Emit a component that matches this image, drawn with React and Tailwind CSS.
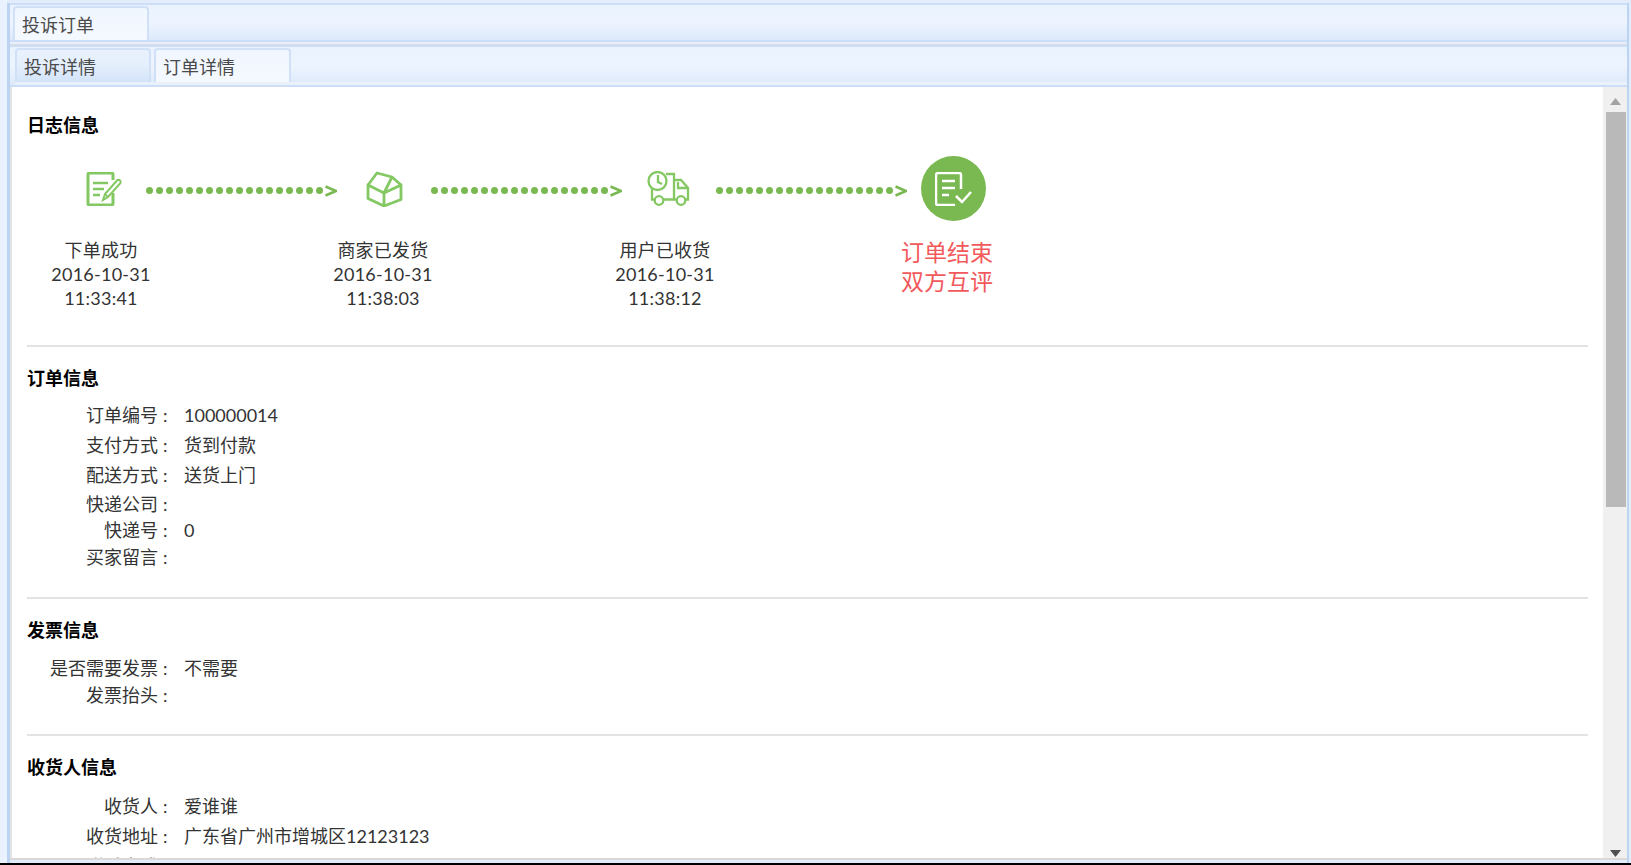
const font = "font-['Lato','Noto_Sans_CJK_SC',sans-serif]"

const NoteIcon = () => (
  <svg width="36" height="34" viewBox="0 0 36 34" fill="none" stroke="#84c863" strokeWidth="2.400">
    <path d="M27 8V2.500a1.500 1.500 0 0 0-1.500-1.500h-22A1.500 1.500 0 0 0 2 2.500v29A1.500 1.500 0 0 0 3.500 33h22a1.500 1.500 0 0 0 1.500-1.500V21" strokeWidth="3" />
    <path d="M7 11h15M7 17h11M7 23h7" />
    <path d="M17 28l2-6L31 8.500a2 2 0 0 1 3 0 2 2 0 0 1 0 3L22 25z" strokeWidth="2" />
    <path d="M19 22l3 3" strokeWidth="1.800" />
  </svg>
)

const BoxIcon = () => (
  <svg width="37" height="36" viewBox="0 0 37 36" fill="none" stroke="#84c863" strokeWidth="2.800" strokeLinejoin="round">
    <path d="M2 14l16 8 17-8v14.500L18 35 2 27.500z" />
    <path d="M18 22v13" />
    <path d="M2 14L11 2l15 4 9 8" />
    <path d="M18 22l8-16" />
  </svg>
)

const TruckIcon = () => (
  <svg width="43" height="35" viewBox="0 0 43 35" fill="none" stroke="#84c863" strokeWidth="2.300">
    <circle cx="10.500" cy="10" r="9" />
    <path d="M11 4v7l4 2" />
    <path d="M5 18v10.500h3M19 3h8v25.500H16M27 9h7l7 8v11.500h-3M27 28.500h3" />
    <path d="M31 11v6h9" />
    <circle cx="12" cy="29.500" r="4.300" />
    <circle cx="34" cy="29.500" r="4.300" />
  </svg>
)

const DoneIcon = () => (
  <div className="w-[65px] h-[65px] rounded-full bg-[#7ab951] flex items-center justify-center">
    <svg width="37" height="34" viewBox="0 0 37 34" fill="none" stroke="#fff" strokeWidth="2.500">
      <path d="M26 17V3a2 2 0 0 0-2-2H3a2 2 0 0 0-2 2v28a2 2 0 0 0 2 2h17" />
      <path d="M7 9h13M7 16h13M7 23h7" />
      <path d="M21 24l6 6 9-10" />
    </svg>
  </div>
)

const Dots = ({ className }) => (
  <div className={`flex items-center pt-[4px] ${className}`}>
    <div className="flex gap-[3px]">
      {Array.from({ length: 18 }).map((_, i) => (
        <span key={i} className="w-[7px] h-[7px] rounded-full bg-[#7ab951]" />
      ))}
    </div>
    <svg className="ml-[2px]" width="12" height="12" viewBox="0 0 12 12" fill="none" stroke="#7ab951" strokeWidth="2.600">
      <path d="M0.500 1.500L11 6 0.500 10.500" />
    </svg>
  </div>
)

const Row = ({ label, value, h = 'h-[30px]' }) => (
  <div className={`flex items-center ${h}`}>
    <div className="w-[131px] text-right whitespace-nowrap">{label}</div>
    <div className="w-[11px] ml-[5px] mr-[10px]">:</div>
    <div className="whitespace-nowrap">{value}</div>
  </div>
)

const Heading = ({ children, className }) => (
  <div className={`h-[24px] leading-[24px] font-bold text-black ${className}`}>{children}</div>
)

const Divider = ({ className }) => <div className={`h-[2px] bg-[#e3e3e3] ${className}`} />

const Step = ({ lines }) => (
  <div className="w-[100px] text-center whitespace-nowrap leading-[24px] tracking-[0.25px]">
    {lines.map((l) => (
      <div key={l}>{l}</div>
    ))}
  </div>
)

const Tab = ({ active, children, className }) => (
  <div
    className={`h-[34px] w-[135px] shrink-0 rounded-t-[4px] border-2 border-b-0 border-[#cfe0f7] leading-[34px] pl-[7px] text-[#4a4a4a] ${
      active
        ? 'bg-gradient-to-b from-[#f0f6ff] via-[#f3f8ff] to-[#f4f8ff]'
        : 'bg-gradient-to-b from-[#e9f1fd] via-[#e4eefc] to-[#d3e3f9]'
    } ${className}`}
  >
    {children}
  </div>
)

// tab bar: the inner one has its tabs on a thin pale band above the blue bottom line
const Strip = ({ band, children, className }) => (
  <div className={`flex flex-col shrink-0 border-t-2 border-b-2 border-[#cddff7] bg-gradient-to-b from-[#e9f2fe] via-[#edf4ff] to-[#dde9fa] ${className}`}>
    <div className="flex-1 min-h-0 flex items-end">{children}</div>
    {band && <div className="h-[3px] shrink-0 bg-[#eaf1fc]" />}
  </div>
)

const Scrollbar = () => (
  <div className="w-[24px] shrink-0 bg-[#f0f0f0] flex flex-col items-center pl-[1px]">
    <div className="h-[25px] shrink-0 flex items-center justify-center pt-[3px]">
      <svg width="11" height="7" viewBox="0 0 11 7">
        <path d="M5.500 0L11 7H0z" fill="#a3a3a3" />
      </svg>
    </div>
    <div className="w-[20px] h-[395px] shrink-0 bg-[#b9b9b9]" />
    <div className="flex-1" />
    <div className="h-[10px] shrink-0 flex items-center justify-center">
      <svg width="11" height="7" viewBox="0 0 11 7">
        <path d="M5.500 7L11 0H0z" fill="#505050" />
      </svg>
    </div>
  </div>
)

export default function App() {
  return (
    <div className={`h-screen w-full overflow-hidden flex bg-[#e2ecfa] border-b-2 border-black text-[18px] text-[#333] ${font}`}>
      <div className="w-[7px] shrink-0 bg-[#e9f2fe]" />
      <div className="flex-1 min-w-0 flex flex-col border-l-[3px] border-r-[2px] border-[#bcd3f1] mt-[3px]">
        <Strip className="h-[39px] pl-[3px]">
          <Tab active className="w-[136px]">投诉订单</Tab>
        </Strip>
        <div className="h-[3px] shrink-0 bg-[#e6effb] border-b border-[#dcdcdc]" />
        <Strip band className="h-[42px] pl-[5px]">
          <Tab className="mr-[3px] w-[136px] leading-[35px]">投诉详情</Tab>
          <Tab active className="w-[137px] leading-[35px]">订单详情</Tab>
        </Strip>
        <div className="flex-1 min-h-0 flex bg-white border-l-2 border-[#e3e3e3]">
          <div className="flex-1 min-w-0 overflow-hidden pl-[15px] pr-[15px]">
            <Heading className="mt-[26px]">日志信息</Heading>

            <div className="flex items-center h-[65px] mt-[19px] ml-[59px]">
              <NoteIcon />
              <Dots className="ml-[24px]" />
              <div className="ml-[29px]"><BoxIcon /></div>
              <Dots className="ml-[28px]" />
              <div className="ml-[25px]"><TruckIcon /></div>
              <Dots className="ml-[26px]" />
              <div className="ml-[14px]"><DoneIcon /></div>
            </div>

            <div className="flex gap-[182px] mt-[17px] ml-[24px]">
              <Step lines={['下单成功', '2016-10-31', '11:33:41']} />
              <Step lines={['商家已发货', '2016-10-31', '11:38:03']} />
              <Step lines={['用户已收货', '2016-10-31', '11:38:12']} />
              <div className="w-[100px] text-center whitespace-nowrap text-[23px] leading-[29px] text-[#f2595c]">
                <div>订单结束</div>
                <div>双方互评</div>
              </div>
            </div>

            <Divider className="mt-[35px]" />
            <Heading className="mt-[19px]">订单信息</Heading>
            <div className="mt-[10px]">
              <Row label="订单编号" value="100000014" />
              <Row label="支付方式" value="货到付款" />
              <Row label="配送方式" value="送货上门" h="h-[31px]" />
              <Row label="快递公司" value="" h="h-[26px]" />
              <Row label="快递号" value="0" h="h-[27px]" />
              <Row label="买家留言" value="" h="h-[27px]" />
            </div>

            <Divider className="mt-[26px]" />
            <Heading className="mt-[19px]">发票信息</Heading>
            <div className="mt-[13px]">
              <Row label="是否需要发票" value="不需要" h="h-[27px]" />
              <Row label="发票抬头" value="" h="h-[27px]" />
            </div>

            <Divider className="mt-[25px]" />
            <Heading className="mt-[19px]">收货人信息</Heading>
            <div className="mt-[12px]">
              <Row label="收货人" value="爱谁谁" />
              <Row label="收货地址" value="广东省广州市增城区12123123" />
              <Row label="联系方式" value="" />
            </div>
          </div>
          <Scrollbar />
        </div>
        <div className="h-[5px] shrink-0 border-t-2 border-[#d9d9d9] bg-[#e2ecfa]" />
      </div>
      <div className="w-[2px] shrink-0" />
    </div>
  )
}
